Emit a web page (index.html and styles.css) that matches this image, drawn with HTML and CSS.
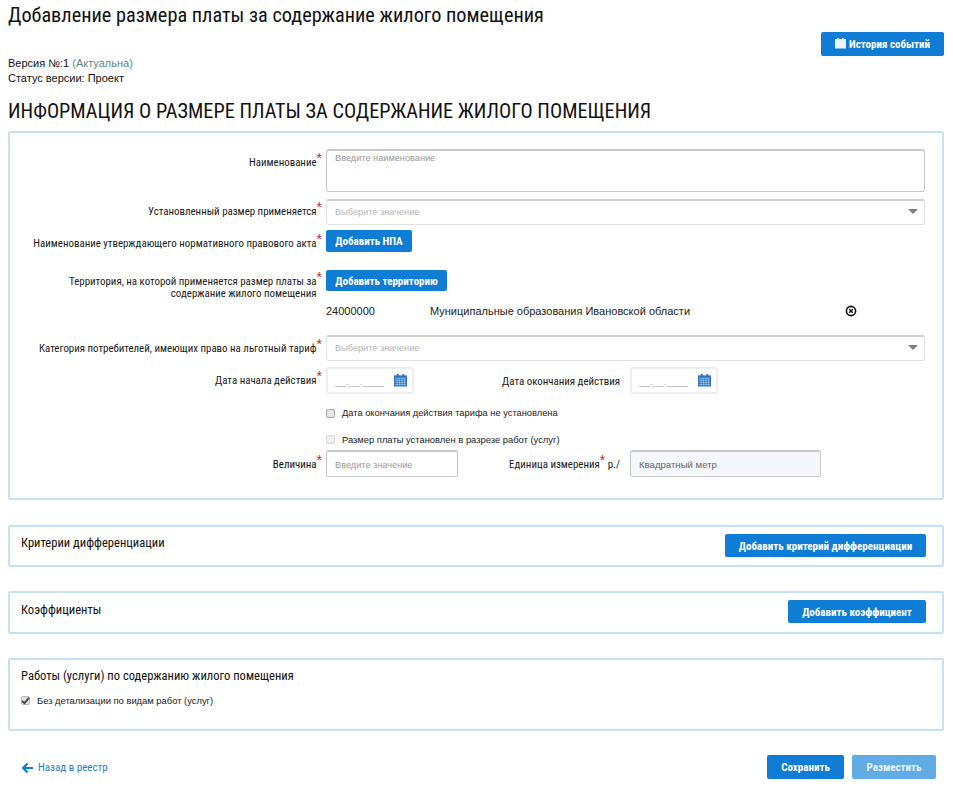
FILE: index.html
```html
<!DOCTYPE html>
<html lang="ru">
<head>
<meta charset="utf-8">
<title>Добавление размера платы</title>
<link rel="stylesheet" href="styles.css">
</head>
<body>
<svg class="defs" width="0" height="0" aria-hidden="true">
  <symbol id="cal" viewBox="0 0 14 14">
    <path d="M0 2h14v12H0z" fill="currentColor"/>
    <path d="M3 0.5h2v2.5H3zM9 0.5h2v2.5H9z" fill="currentColor"/>
    <path d="M1 5h12M1 7.3h12M1 9.6h12M1 11.9h12M3.4 5v8M6 5v8M8.6 5v8M11.2 5v8" stroke="#fff" stroke-opacity=".55" stroke-width=".7" fill="none"/>
  </symbol>
</svg>
<header class="top">
  <h1 class="page-title">Добавление размера платы за содержание жилого помещения</h1>
  <div class="meta-row">
    <div class="meta">
      <div>Версия №:1 <span class="actual">(Актуальна)</span></div>
      <div>Статус версии: Проект</div>
    </div>
    <button class="btn btn-history"><svg class="btn-ic"><use href="#cal"/></svg>История событий</button>
  </div>
</header>
<h2 class="section-title">ИНФОРМАЦИЯ О РАЗМЕРЕ ПЛАТЫ ЗА СОДЕРЖАНИЕ ЖИЛОГО ПОМЕЩЕНИЯ</h2>

<section class="card card-main">
  <div class="row row-name">
    <label class="lbl">Наименование<i>*</i></label>
    <div class="field field-area ph">Введите наименование</div>
  </div>
  <div class="row row-sel1">
    <label class="lbl">Установленный размер применяется<i>*</i></label>
    <div class="field field-select ph-light">Выберите значение<span class="caret"></span></div>
  </div>
  <div class="row row-npa">
    <label class="lbl">Наименование утверждающего нормативного правового акта<i>*</i></label>
    <button class="btn btn-small">Добавить НПА</button>
  </div>
  <div class="row row-terr">
    <label class="lbl lbl-two">Территория, на которой применяется размер платы за<i>*</i><br>содержание жилого помещения<i class="ghost">*</i></label>
    <button class="btn btn-small">Добавить территорию</button>
  </div>
  <div class="terr-item">
    <span class="terr-code">24000000</span>
    <span class="terr-name">Муниципальные образования Ивановской области</span>
    <svg class="terr-x" width="12" height="12" viewBox="0 0 12 12"><circle cx="6" cy="6" r="4.6" fill="none" stroke="#111" stroke-width="1.6"/><path d="M4.2 4.2l3.6 3.6M7.800 4.2l-3.6 3.6" stroke="#111" stroke-width="1.4"/></svg>
  </div>
  <div class="row row-sel2">
    <label class="lbl">Категория потребителей, имеющих право на льготный тариф<i>*</i></label>
    <div class="field field-select ph-light">Выберите значение<span class="caret"></span></div>
  </div>
  <div class="row row-date">
    <label class="lbl">Дата начала действия<i>*</i></label>
    <div class="field field-date"><span class="mask">__.__.____</span><svg class="date-ic"><use href="#cal"/></svg></div>
    <label class="lbl2 lbl2-date">Дата окончания действия</label>
    <div class="field field-date"><span class="mask">__.__.____</span><svg class="date-ic"><use href="#cal"/></svg></div>
  </div>
  <div class="check check-1"><span class="box"></span>Дата окончания действия тарифа не установлена</div>
  <div class="check check-2"><span class="box box-off"></span>Размер платы установлен в разрезе работ (услуг)</div>
  <div class="row row-val">
    <label class="lbl lbl-dark">Величина<i>*</i></label>
    <div class="field field-val ph">Введите значение</div>
    <label class="lbl2 lbl2-unit">Единица измерения<i>*</i> р./</label>
    <div class="field field-unit">Квадратный метр</div>
  </div>
</section>

<section class="card card-bar card-crit">
  <h3 class="card-title">Критерии дифференциации</h3>
  <button class="btn btn-add">Добавить критерий дифференциации</button>
</section>
<section class="card card-bar card-coef">
  <h3 class="card-title">Коэффициенты</h3>
  <button class="btn btn-add">Добавить коэффициент</button>
</section>
<section class="card card-works">
  <h3 class="card-title">Работы (услуги) по содержанию жилого помещения</h3>
  <div class="check check-3"><span class="box box-on"><svg width="9" height="9" viewBox="0 0 9 9"><path d="M1 4.8l2.4 2.4L8 1.800" fill="none" stroke="#444" stroke-width="1.800"/></svg></span>Без детализации по видам работ (услуг)</div>
</section>

<footer class="foot">
  <a class="back"><svg width="11" height="10" viewBox="0 0 11 10"><path d="M5.500 0.500L1 5l4.500 4.500M1.500 5H11" fill="none" stroke="#0f7dd6" stroke-width="2.200"/></svg>Назад в реестр</a>
  <div class="foot-btns">
    <button class="btn btn-foot">Сохранить</button>
    <button class="btn btn-foot btn-off">Разместить</button>
  </div>
</footer>
</body>
</html>
```
FILE: styles.css
```css
* { box-sizing: border-box; }
html, body { margin: 0; padding: 0; }
body {
  width: 953px;
  height: 794px;
  overflow: hidden;
  padding: 0 9px 0 8px;
  background: #fff;
  color: #111;
  font: 11px/13px "Liberation Sans", Arial, sans-serif;
}
.defs { position: absolute; }
.page-title {
  margin: 0;
  padding-top: 3px;
  height: 32px;
  font: 400 20.300px/24px Roboto, sans-serif;
  font-stretch: 85%;
  color: #111;
  white-space: nowrap;
}
.meta-row { display: flex; justify-content: space-between; align-items: flex-start; }
.meta { padding-top: 24px; line-height: 15px; font-size: 11px; }
.actual { color: #5c8a80; }
.btn {
  border: 0;
  border-radius: 2px;
  background: #0f7dd6;
  color: #fff;
  font: 700 11px/13px Roboto, sans-serif;
  font-stretch: 85%;
  padding: 1px 0 0;
  display: inline-flex;
  align-items: center;
  justify-content: center;
}
.btn-history { width: 123px; height: 24px; margin-right: 0; }
.btn-ic { width: 11px; height: 12px; margin-right: 3px; color: #e8f2fb; margin-top: -3px; }
.section-title {
  margin: 0;
  padding-top: 13px;
  height: 45px;
  font: 400 20.300px/24px Roboto, sans-serif;
  font-stretch: 85%;
  color: #111;
  white-space: nowrap;
}
.card {
  border: 2px solid #c5e1f8;
  border-radius: 2px;
  background: #fff;
}
.card-main { height: 369px; padding-top: 16px; }
.row { display: flex; gap: 4px; }
.lbl {
  flex: none;
  width: 312px;
  text-align: right;
  font: 400 10.900px/13px Roboto, sans-serif;
  font-stretch: 85%;
  color: #1a1a1a;
  white-space: nowrap;
}
.lbl i, .lbl2 i {
  font: 400 14px/0 "Liberation Sans", sans-serif;
  color: #c8202a;
  vertical-align: 3px;
  margin-left: 0;
}
.lbl i.ghost { visibility: hidden; }
.field {
  flex: none;
  position: relative;
  border: 1px solid #dfe3e8;
  border-top: 2px solid #cfcfcf;
  border-radius: 3px;
  background: #fff;
  font-size: 9.200px;
  line-height: 13px;
  color: #999;
}
.ph { color: #9a9a9a; padding: 1px 8px; }
.field-area { width: 599px; height: 43px; border: 1px solid #c8c8c8; border-top-width: 2px; }
.field-select { width: 599px; height: 26px; padding: 5px 8px; color: #b5b5b5; }
.caret {
  position: absolute;
  right: 6px;
  top: 8px;
  border: 5px solid transparent;
  border-top: 5px solid #808080;
  border-bottom: 0;
}
.row-name .lbl { padding-top: 7px; }
.row-sel1 { margin-top: 7px; }
.row-sel1 .lbl { padding-top: 6px; }
.row-npa { margin-top: 5px; }
.row-npa .lbl { padding-top: 7px; }
.btn-small { height: 22px; border-radius: 2px; }
.row-npa .btn-small { width: 86px; }
.row-terr { margin-top: 18px; height: 31px; }
.row-terr .btn-small { width: 121px; height: 21px; }
.lbl-two { padding-top: 6px; line-height: 12px; }
.terr-item {
  display: flex;
  align-items: center;
  height: 14px;
  margin-top: 3px;
  margin-left: 316px;
  font-size: 11px;
  color: #222;
}
.terr-code { width: 104px; }
.terr-name { width: 415px; }
.terr-x { margin-top: -1px; }
.row-sel2 { margin-top: 17px; }
.row-sel2 .lbl { padding-top: 7px; }
.row-date { margin-top: 6px; }
.row-date .lbl { padding-top: 7px; }
.field-date { width: 88px; height: 27px; border: 2px solid #eceef0; }
.mask { position: absolute; left: 7px; top: 6px; color: #b4b4b4; font-size: 10px; letter-spacing: -.1px; }
.date-ic { position: absolute; right: 5px; top: 4px; width: 13px; height: 14px; color: #2a76c8; }
.lbl2 {
  flex: none;
  text-align: right;
  font: 400 10.900px/13px Roboto, sans-serif;
  font-stretch: 85%;
  color: #1a1a1a;
  white-space: nowrap;
}
.lbl2-date { width: 206px; padding-top: 8px; margin-left: -4px; margin-right: 6px; }
.check {
  display: flex;
  align-items: center;
  height: 13px;
  font-size: 9.400px;
  color: #222;
}
.box {
  flex: none;
  width: 9px;
  height: 9px;
  margin-right: 7px;
  border: 1px solid #a8a8a8;
  border-radius: 2px;
  background: #e6e6e6;
}
.box-off { border-color: #d8d8d8; background: #f0f0f0; }
.box-on { display: flex; align-items: center; justify-content: center; background: #e2e2e2; border-color: #bbb; width: 9px; height: 9px; }
.box-on svg { flex: none; }
.check-1 { margin: 13px 0 0 316px; font-size: 9.300px; }
.check-2 { margin: 13px 0 0 316px; }
.row-val { margin-top: 4px; }
.row-val .lbl { padding-top: 8px; color: #111; }
.field-val { width: 132px; height: 27px; padding: 7px 8px; border: 1px solid #c8c8c8; border-top-width: 2px; }
.lbl2-unit { width: 158px; margin-left: 0; margin-right: 6px; padding-top: 8px; padding-left: 0; }
.field-unit { width: 191px; height: 27px; padding: 6px 8px; font-size: 9.600px; background: #f4f7fb; border: 1px solid #c8c8c8; border-top-width: 2px; color: #666; }
.card-bar { display: flex; justify-content: space-between; padding: 0 16px 0 11px; }
.card-crit { height: 42px; margin-top: 25px; }
.card-coef { height: 43px; margin-top: 24px; }
.card-works { height: 73px; margin-top: 24px; padding: 0 11px; }
.card-title {
  margin: 0;
  font: 400 12.560px/16px Roboto, sans-serif;
  font-stretch: 85%;
  color: #111;
}
.card-bar .card-title { padding-top: 8px; }
.card-coef.card-bar .card-title { padding-top: 9px; }
.card-works .card-title { padding-top: 8px; }
.btn-add { height: 23px; margin-top: 7px; }
.card-crit .btn-add { width: 201px; }
.card-coef .btn-add { width: 138px; }
.check-3 { margin-top: 10px; }
.check-3 .box { margin-right: 7px; }
.foot {
  display: flex;
  justify-content: space-between;
  align-items: flex-start;
  margin-top: 24px;
  padding: 0 8px 0 14px;
}
.back {
  display: flex;
  align-items: center;
  gap: 5px;
  padding-top: 6px;
  font: 400 11px/13px Roboto, sans-serif;
  font-stretch: 85%;
  color: #2a7fc4;
}
.foot-btns { display: flex; gap: 8px; }
.btn-foot { width: 77px; height: 24px; }
.btn-off { width: 84px; background: #62ace6; color: #e6f2fb; }
```
